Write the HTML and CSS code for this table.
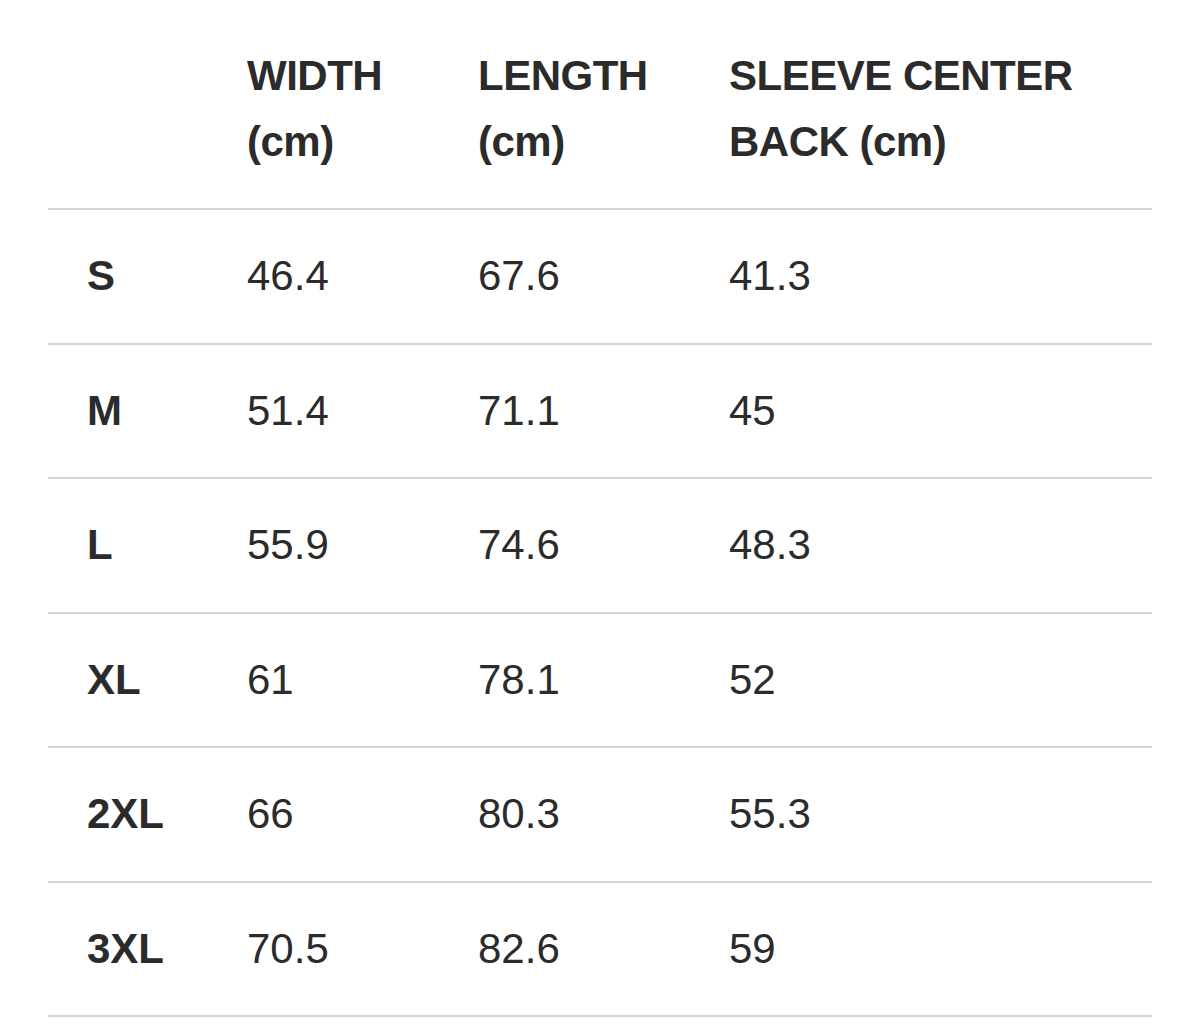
FILE: index.html
```html
<!DOCTYPE html>
<html>
<head>
<meta charset="utf-8">
<link rel="stylesheet" href="styles.css">
</head>
<body>
<div class="sheet">
  <div class="row head">
    <div class="cell"></div>
    <div class="cell">WIDTH<br>(cm)</div>
    <div class="cell">LENGTH<br>(cm)</div>
    <div class="cell">SLEEVE CENTER<br>BACK (cm)</div>
  </div>
  <div class="row"><div class="cell size">S</div><div class="cell">46.4</div><div class="cell">67.6</div><div class="cell">41.3</div></div>
  <div class="row"><div class="cell size">M</div><div class="cell">51.4</div><div class="cell">71.1</div><div class="cell">45</div></div>
  <div class="row"><div class="cell size">L</div><div class="cell">55.9</div><div class="cell">74.6</div><div class="cell">48.3</div></div>
  <div class="row"><div class="cell size">XL</div><div class="cell">61</div><div class="cell">78.1</div><div class="cell">52</div></div>
  <div class="row"><div class="cell size">2XL</div><div class="cell">66</div><div class="cell">80.3</div><div class="cell">55.3</div></div>
  <div class="row"><div class="cell size">3XL</div><div class="cell">70.5</div><div class="cell">82.6</div><div class="cell">59</div></div>
</div>
</body>
</html>
```

FILE: styles.css
```css
html, body {
  margin: 0;
  padding: 0;
  background: #ffffff;
}
body {
  font-family: "Liberation Sans", Arial, sans-serif;
  color: #2b2b2b;
}
.sheet {
  margin: 0 48px;
  padding-top: 10px;
}
.row {
  display: grid;
  grid-template-columns: 160px 231px 251px 1fr;
  padding: 33.25px 0 33.25px 39px;
  border-bottom: 2px solid #d3d3d3;
  font-size: 42px;
  line-height: 66px;
}
.head {
  padding-top: 33px;
  padding-bottom: 33px;
  font-weight: bold;
  letter-spacing: -0.5px;
}
.size {
  font-weight: bold;
}
```
